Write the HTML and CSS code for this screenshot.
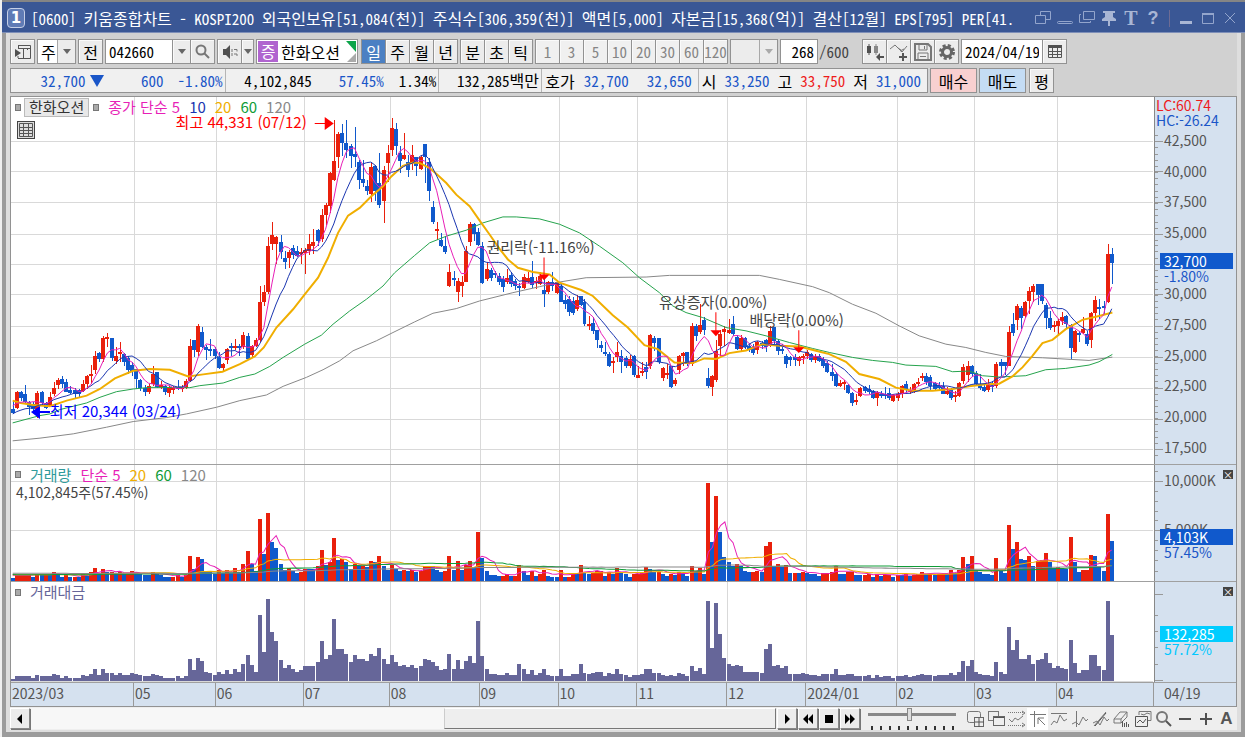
FILE: index.html
```html
<!DOCTYPE html>
<html lang="ko">
<head>
<meta charset="utf-8">
<title>[0600] 키움종합차트</title>
<link rel="stylesheet" href="styles.css">
</head>
<body>
<div class="window">
  <header class="titlebar">
    <span class="badge">1</span>
    <h1 class="title">[0600] <b>키움종합차트</b> - KOSPI200 <b>외국인보유</b>[51,084(<b>천</b>)] <b>주식수</b>[306,359(<b>천</b>)] <b>액면</b>[5,000] <b>자본금</b>[15,368(<b>억</b>)] <b>결산</b>[12<b>월</b>] EPS[795] PER[41.</h1>
    <div class="win-tools">
      <button aria-label="분리"><svg width="18" height="18" viewBox="0 0 18 18"><path d="M6.500 6.500V2.500h10v8h-5M1.500 6.500h10v8h-10z"/></svg></button>
      <button aria-label="접기"><svg width="18" height="18" viewBox="0 0 18 18"><rect x="1.500" y="12.500" width="15" height="2" rx="1"/></svg></button>
      <button aria-label="복제"><svg width="18" height="18" viewBox="0 0 18 18"><path d="M5.500 2.500h11v8h-11zM3 5.500H1.500v8h11V12"/></svg></button>
      <button aria-label="고정"><svg width="18" height="18" viewBox="0 0 18 18"><path class="solid" d="M3 2h12v2h-2v4l3 2v2h-6v5H8v-5H2v-2l3-2V4H3z"/></svg></button>
      <button class="serif" aria-label="글꼴">T</button>
      <button class="help" aria-label="도움말">?</button>
      <i class="sep"></i>
      <button aria-label="최소화"><svg width="18" height="18" viewBox="0 0 18 18"><path class="solid" d="M3 12h12v3H3z"/></svg></button>
      <button aria-label="최대화"><svg width="18" height="18" viewBox="0 0 18 18"><path d="M3.500 4.500h11v10h-11zM3 5.500h12M3 4.500h12"/></svg></button>
      <button aria-label="닫기"><svg width="18" height="18" viewBox="0 0 18 18"><path d="M4 4l10 10M14 4L4 14"/></svg></button>
    </div>
  </header>

  <main class="body">
    <section class="tools" aria-label="도구">
      <button class="btn" aria-label="패널"><svg width="20" height="18" viewBox="0 0 20 18"><path class="ln" d="M5 2.500h12.500v13H5M5.500 2v3M5 15v-2M5 5.500h12M10.500 5v10M14.500 5v2"/><path class="fl" d="M2 6l6 4-6 4z"/></svg></button>
      <div class="combo w-type"><select aria-label="종목구분"><option>주</option></select></div>
      <button class="btn ko">전</button>
      <div class="group">
        <input class="field code" aria-label="종목코드" value="042660">
        <button class="btn arrow" aria-label="목록"></button>
        <button class="btn" aria-label="검색"><svg width="18" height="18" viewBox="0 0 18 18"><circle class="ln2 gray" cx="7" cy="7" r="4.500"/><path class="ln2 gray" d="M10.500 10.500L15 15"/></svg></button>
      </div>
      <div class="group">
        <button class="btn" aria-label="소리"><svg width="18" height="18" viewBox="0 0 18 18"><path class="fl" d="M2 6h3l4-4v14l-4-4H2z"/><path class="ln gray" d="M11 6v3M11 10v3M13 6.500h3v2M13 11h3v2"/></svg></button>
        <button class="btn arrow slim" aria-label="소리 설정"></button>
      </div>
      <div class="stock"><b>증</b><span>한화오션</span><svg width="10" height="22" viewBox="0 0 10 22"><path fill="#0ca44a" d="M0 0h10v11z"/><path fill="#aaa" d="M10 12v9H1z"/></svg></div>
      <div class="group ko">
        <button class="btn on">일</button><button class="btn">주</button><button class="btn">월</button><button class="btn">년</button>
      </div>
      <div class="group ko"><button class="btn">분</button><button class="btn">초</button><button class="btn">틱</button></div>
      <div class="group off">
        <button class="btn">1</button><button class="btn">3</button><button class="btn">5</button><button class="btn">10</button><button class="btn">20</button><button class="btn">30</button><button class="btn">60</button><button class="btn">120</button>
      </div>
      <div class="combo w-min off"><select aria-label="분 단위" disabled><option></option></select></div>
      <label class="count"><input class="field" aria-label="봉 개수" value="268"><span>/600</span></label>
      <div class="group">
        <button class="btn" aria-label="차트 유형"><svg width="20" height="18" viewBox="0 0 20 18"><path class="fl" d="M2 3h4v7H2zM3.500 1h1v11h-1z"/><path class="fl gray" d="M9 3h4v7H9zM10.500 1h1v11h-1z"/><path class="fl" d="M11 14l4-4v3h4v2h-4v3z"/></svg></button>
        <button class="btn" aria-label="지표 추가"><svg width="20" height="18" viewBox="0 0 20 18"><path class="ln gray" d="M1 6l5-4 7 7 5-6M9 5l3 2M11 8l4-2"/><path class="ln2" d="M14 10v8M10 14h8"/></svg></button>
        <button class="btn" aria-label="저장"><svg width="20" height="18" viewBox="0 0 20 18"><path class="ln2 gray" d="M2 1h13l3 3v13H2z"/><path class="ln gray" d="M6 1v6h8V1M5 17v-7h10v7M7 13.500h6M11.500 3v3"/></svg></button>
        <button class="btn" aria-label="설정"><svg width="18" height="18" viewBox="0 0 18 18"><circle cx="9" cy="9" r="6.500" fill="none" stroke="#666" stroke-width="3" stroke-dasharray="3 2.100"/><circle cx="9" cy="9" r="4.500" fill="none" stroke="#666" stroke-width="3"/></svg></button>
      </div>
      <div class="group"><input class="field date" aria-label="기준일" value="2024/04/19"><button class="btn" aria-label="달력"><svg width="18" height="18" viewBox="0 0 18 18"><path class="fl" d="M2 2h14v3H2z"/><path class="ln" d="M2.500 3v11.500h13V3M2 8.500h13M2 11.500h13M6.500 5v9M11.500 5v9"/></svg></button></div>
    </section>

    <section class="quote" aria-label="시세">
      <div class="strip">
        <div class="cell c1"><span class="dn">32,700</span><i class="tri"></i><span class="dn w2">600</span><span class="dn">-1.80%</span></div>
        <div class="cell c2"><span>4,102,845</span><span class="dn">57.45%</span><span>1.34%</span></div>
        <div class="cell c3"><span>132,285<span class="ko">백만</span></span></div>
        <div class="cell c4"><span class="ko">호가</span><span class="dn">32,700</span><span class="dn wide">32,650</span></div>
        <div class="cell c5"><span class="ko">시</span><span class="dn">33,250</span><span class="ko">고</span><span class="up">33,750</span><span class="ko">저</span><span class="dn">31,000</span></div>
      </div>
      <button class="btn buy ko">매수</button>
      <button class="btn sell ko">매도</button>
      <button class="btn ko">평</button>
    </section>

    <section class="chart" aria-label="차트">
      <div class="pane price">
        <div class="plot">
          <svg id="price" viewBox="11 97 1144 368" preserveAspectRatio="none"></svg>
          <div class="legend"><i></i><button class="name">한화오션</button><i></i><span class="m5">종가 단순 5</span><span class="m10">10</span><span class="m20">20</span><span class="m60">60</span><span class="m120">120</span></div>
          <button class="gridbtn" aria-label="표"><svg width="16" height="16" viewBox="0 0 16 16"><path class="ln" d="M1.500 1.500h13v13h-13zM1 5.500h14M1 8.500h14M1 11.500h14M5.500 2v12M10.500 2v12"/></svg></button>
          <span class="note hi">최고 44,331 (07/12)</span>
          <span class="note lo">최저 20,344 (03/24)</span>
          <span class="note n1">권리락(-11.16%)</span>
          <span class="note n2">유상증자(0.00%)</span>
          <span class="note n3">배당락(0.00%)</span>
        </div>
        <div class="axis">
          <svg id="axis1" viewBox="1155 97 82 368" preserveAspectRatio="none"></svg>
          <div class="limits"><span class="up">LC:60.74</span><span class="dn">HC:-26.24</span></div>
          <ul class="scale"><li>42,500</li><li>40,000</li><li>37,500</li><li>35,000</li><li></li><li>30,000</li><li>27,500</li><li>25,000</li><li>22,500</li><li>20,000</li><li>17,500</li></ul>
          <div class="tag t1"><b>32,700</b><span>-1.80%</span></div>
        </div>
      </div>
      <div class="pane volume">
        <div class="plot">
          <svg id="volume" viewBox="11 466 1144 116" preserveAspectRatio="none"></svg>
          <div class="legend"><i></i><span class="vol">거래량</span><span class="m5">단순 5</span><span class="m20">20</span><span class="m60">60</span><span class="m120">120</span></div>
          <div class="sub">4,102,845주(57.45%)</div>
        </div>
        <div class="axis">
          <svg id="axis2" viewBox="1155 466 82 116" preserveAspectRatio="none"></svg>
          <ul class="scale"><li>10,000K</li><li>5,000K</li></ul>
          <div class="tag t2"><b>4,103K</b><span>57.45%</span></div>
          <button class="x" aria-label="거래량 닫기">×</button>
        </div>
      </div>
      <div class="pane value">
        <div class="plot">
          <svg id="value" viewBox="11 584 1144 100" preserveAspectRatio="none"></svg>
          <div class="legend"><i></i><span class="val">거래대금</span></div>
        </div>
        <div class="axis">
          <svg id="axis3" viewBox="1155 584 82 100" preserveAspectRatio="none"></svg>
          <div class="tag t3"><b>132,285</b><span>57.72%</span></div>
          <button class="x" aria-label="거래대금 닫기">×</button>
        </div>
      </div>
      <div class="dates"><div class="months"><span>2023/03</span><span>05</span><span>06</span><span>07</span><span>08</span><span>09</span><span>10</span><span>11</span><span>12</span><span>2024/01</span><span>02</span><span>03</span><span>04</span></div><div class="today">04/19</div></div>
    </section>

    <footer class="nav">
      <button class="sb" aria-label="이전"><svg width="12" height="12" viewBox="0 0 12 12"><path d="M8 1v10L3 6z"/></svg></button>
      <div class="track"><div class="thumb"></div></div>
      <button class="sb" aria-label="다음"><svg width="12" height="12" viewBox="0 0 12 12"><path d="M4 1v10l5-5z"/></svg></button>
      <button class="sb" aria-label="뒤로"><svg width="12" height="12" viewBox="0 0 12 12"><path d="M6 1v10L1 6zM11 1v10L6 6z"/></svg></button>
      <button class="sb" aria-label="정지"><svg width="12" height="12" viewBox="0 0 12 12"><path d="M2 2h8v8H2z"/></svg></button>
      <button class="sb" aria-label="앞으로"><svg width="12" height="12" viewBox="0 0 12 12"><path d="M1 1v10l5-5zM6 1v10l5-5z"/></svg></button>
      <div class="zoom"><input type="range" aria-label="확대" value="47"></div>
      <div class="icons">
        <button aria-label="창 추가"><svg width="18" height="18" viewBox="0 0 18 18"><rect class="ln gray" x="1.500" y="1.500" width="13" height="11" rx="2"/><rect x="8.500" y="7.500" width="9" height="9" fill="#eee" stroke="#666"/><path class="ln" d="M13 8v9M9 12h9"/></svg></button>
        <button aria-label="창 복사"><svg width="18" height="18" viewBox="0 0 18 18"><rect class="ln gray" x="1.500" y="1.500" width="10" height="9"/><rect x="6.500" y="6.500" width="11" height="9" fill="#eee" stroke="#666"/><path class="ln" d="M7 7.500h10"/></svg></button>
        <button aria-label="구간"><svg width="18" height="18" viewBox="0 0 18 18"><path class="ln gray" stroke-dasharray="1 1" d="M0 2.500h15M0 15.500h15"/><path class="ln gray" d="M1 9l3 3 3-4 3 2 5-4M14 1l3 2-3 2M14 13l3 2-3 2"/></svg></button>
        <button class="sel" aria-label="선택"><svg width="18" height="18" viewBox="0 0 18 18"><path class="ln gray" d="M1 4.500h16M5.500 1v16M9 8l7 7M9 14V8h6"/></svg></button>
        <button aria-label="수평선"><svg width="18" height="18" viewBox="0 0 18 18"><path class="ln gray" d="M1 3.500h16M1 15l3-4 3 2 3-8 4 6 3-2"/></svg></button>
        <button aria-label="수직선"><svg width="18" height="18" viewBox="0 0 18 18"><path class="ln gray" d="M5.500 1v16M1 14l4-2 3 3 4-8 3 4 2-2"/></svg></button>
        <button aria-label="추세선"><svg width="18" height="18" viewBox="0 0 18 18"><path class="ln gray" d="M2 16L14 2M1 13l4-2 3 4 4-8 3 4 2-2"/><path class="ln" d="M3 16L14 3"/></svg></button>
        <button aria-label="지우개"><svg width="18" height="18" viewBox="0 0 18 18"><path class="ln gray" d="M1 9l6-7h7l-6 7zM1 9v4h7V9M8 13l6-6V2"/><path class="ln" d="M9.500 17v-6M11.500 17v-4M13.500 17v-5M15.500 17v-3"/></svg></button>
        <button aria-label="차트 겹치기"><svg width="18" height="18" viewBox="0 0 18 18"><path class="ln gray" d="M5 5V1.500h12v9h-3M7 4l3 1 3-2 3 1"/><path class="ln" d="M1.500 6.500h12v10h-12zM3 13l3-3 3 3 3-4"/></svg></button>
        <button aria-label="돋보기"><svg width="18" height="18" viewBox="0 0 18 18"><circle class="ln2 gray" cx="7" cy="7" r="5"/><path class="ln2" d="M11 11l5 5"/></svg></button>
        <button aria-label="축소"><svg width="18" height="18" viewBox="0 0 18 18"><path class="fl" d="M3 8h12v2H3z"/></svg></button>
        <button aria-label="확대"><svg width="18" height="18" viewBox="0 0 18 18"><path class="fl" d="M3 8h12v2H3zM8 3h2v12H8z"/></svg></button>
        <button class="letter" aria-label="자동">A</button>
      </div>
    </footer>
  </main>
</div>
<script src="chart.js"></script>
</body>
</html>
```

FILE: styles.css
```css
* { box-sizing: border-box; }
body { margin: 0; background: #f0f0f0; color: #000; font: 15px/20px "Noto Sans Mono CJK KR", "Liberation Sans Narrow", "Noto Sans CJK KR", sans-serif; }
button, input, select { font: inherit; color: inherit; margin: 0; padding: 0; border: 0; border-radius: 0; background: none; }
ul { list-style: none; margin: 0; padding: 0; }
svg { display: block; }
.ko, .title b, .stock, .combo { font-size: 16px; font-weight: 400; }
.window { display: flex; flex-direction: column; min-height: 100vh; margin-left: 2px; background: #9c9c9c; }
.titlebar { display: flex; align-items: center; gap: 6px; height: 33px; padding: 2px 6px 0 5px; background: #3a5795; border-top: 2px solid #858585; border-bottom: 1px solid #7e8fb8; color: #fff; }
.badge { width: 18px; height: 20px; border: 1px solid #c5cfe6; border-radius: 4px; background: #5f7bb5; font: bold 15px/18px "DejaVu Sans", sans-serif; text-align: center; flex: none; }
.title { flex: 1; margin: 0; font-size: 15px; font-weight: 400; white-space: nowrap; overflow: hidden; min-width: 0; }
.win-tools { display: flex; align-items: center; gap: 4px; color: #a9b6d4; }
.win-tools button { width: 18px; height: 20px; }
.win-tools path, .win-tools rect { fill: none; stroke: #93a5cc; }
.win-tools .solid { fill: #a9b6d4; stroke: none; }
.win-tools .serif { font: bold 20px/20px "Liberation Serif", serif; }
.win-tools .help { font: bold 18px/20px "Liberation Sans", sans-serif; }
.sep { width: 1px; height: 17px; margin: 0 3px; background: #6e6c94; }

.body { flex: 1; display: flex; flex-direction: column; margin: 0 4px 5px; border: solid #dedede; border-width: 0 4px 2px; background: #d1d1d1; }
.tools, .quote { display: flex; align-items: center; gap: 2px; white-space: nowrap; }
.tools { padding-top: 6px; }
.quote { padding: 4px 0 3px; }
.group { display: flex; }
.group > * + * { margin-left: -1px; }
.btn { display: flex; align-items: center; justify-content: center; width: 25px; height: 25px; flex: none; border: 1px solid #929292; background: #ececec; box-shadow: inset 1px 1px #fafafa; overflow: hidden; }
.btn.on { background: #4b80c3; color: #fff; box-shadow: none; }
.off .btn { color: #858585; background: #f0f0f0; }
.field { height: 25px; border: 1px solid #929292; background: #fff; padding: 0 3px; }
.code { width: 68px; }
.date { width: 82px; }
.arrow { width: 19px; }
.arrow.slim { width: 13px; }
.arrow::after, .combo::after { content: ""; border: 4px solid transparent; border-top: 5px solid #666; border-bottom: 0; }
.combo { display: flex; align-items: center; position: relative; height: 25px; border: 1px solid #929292; background: linear-gradient(#ececec, #ececec) right / 17px 100% no-repeat #fff; }
.combo select { appearance: none; width: 100%; height: 23px; padding-left: 3px; }
.combo::after { position: absolute; right: 4px; }
.combo::before { content: ""; position: absolute; right: 17px; width: 1px; height: 23px; background: #a8a8a8; }
.w-type { width: 39px; }
.w-min { width: 48px; }
.combo.off { background-color: #ececec; }
.combo.off::after { border-top-color: #aaa; }
.stock { display: flex; align-items: center; gap: 3px; width: 102px; height: 25px; margin-right: 1px; padding: 1px; border: 1px solid #929292; background: #fff; }
.stock b { width: 20px; height: 21px; background: #b064cf; color: #fff; font-weight: 400; text-align: center; }
.stock span { flex: 1; }
.count { display: flex; align-items: center; gap: 1px; margin-right: 11px; }
.count .field { width: 38px; text-align: right; }
.count span { color: #444; }
.ln { fill: none; stroke: #555; }
.ln2 { fill: none; stroke: #555; stroke-width: 2; }
.fl { fill: #505050; }
.gray { stroke: #777; }
.fl.gray { fill: #888; stroke: none; }

.strip { display: flex; height: 25px; border: 1px solid #929292; background: #f0f0f0; width: 918px; }
.cell { display: flex; align-items: center; padding: 0 2px 0 3px; justify-content: flex-end; border-right: 1px solid #b5b5b5; }
.cell:last-child { border: 0; }
.c1 { width: 215px; }
.c2 { width: 214px; gap: 15px; }
.c2 .dn { margin-left: 12px; }
.c3 { width: 103px; }
.c4 { width: 157px; gap: 9px; padding-right: 6px; }
.c4 .wide { margin-left: 9px; }
.c5 { flex: 1; gap: 8px; padding-right: 6px; }
.tri { margin-left: 4px; border: 7px solid transparent; border-top: 12px solid #1a56c8; border-bottom: 0; }
.w2 { width: 60px; margin-right: 14px; text-align: right; }
.dn { color: #1a56c8; }
.up { color: #ee1c1c; }
.quote .buy, .quote .sell { width: 47px; background: #f8d0d0; box-shadow: none; }
.quote .sell { background: #c4dcf4; margin-right: 1px; }

.chart { flex: 1; display: grid; grid-template-rows: 369fr 118fr 101fr 23px; border: 1px solid #929292; background: #fff; font: 14px/16px "Noto Sans CJK KR", sans-serif; }
.pane, .dates { display: grid; grid-template-columns: 1fr 82px; min-height: 0; border-bottom: 1px solid #a0a0a0; }
.dates { border: 0; }
.plot, .axis { position: relative; min-width: 0; min-height: 0; }
.plot > svg:first-child, .axis > svg { position: absolute; inset: 0; width: 100%; height: 100%; }
.axis { border-left: 1px solid #888; background: #d5e1ef; color: #555; }
.legend { position: relative; display: flex; align-items: center; gap: 9px; height: 20px; padding-left: 4px; font-size: 15px; }
.legend i { width: 6px; height: 7px; border: 1px solid #777; background: #aaa; }
.legend .name { height: 19px; margin: 0 -5px 0 -6px; padding: 0 4px; border: 1px solid #bbb; background: #e8e8e8; color: #333; line-height: 16px; }
.m5 { color: #e71fb7; } .m10 { color: #1a35b0; } .m20 { color: #f0ae00; } .m60 { color: #109c38; } .m120 { color: #888; }
.vol { color: #2f9b9b; } .val { color: #666699; }
.sub { position: relative; padding-left: 5px; color: #444; line-height: 14px; }
.gridbtn { position: absolute; left: 6px; top: 24px; width: 18px; height: 18px; border: 1px solid #444; background: #ddd; }
.note { position: absolute; white-space: nowrap; color: #444; font-size: 15px; }
.hi { left: 14.4%; top: 4.6%; color: #f00; }
.lo { left: 3.4%; top: 83.500%; color: #00f; }
.n1 { left: 41.6%; top: 38.6%; }
.n2 { left: 56.7%; top: 53.6%; }
.n3 { left: 64.6%; top: 58.600%; }
.limits { position: absolute; top: 1px; left: 1px; display: grid; line-height: 15px; }
.scale { position: absolute; inset: 35px 0 9px 9px; display: flex; flex-direction: column; justify-content: space-between; }
.scale li { height: 16px; }
.volume .scale { inset: 7px 0 44px 9px; }
.tag { position: absolute; left: 5px; right: 3px; display: grid; color: #1a56c8; line-height: 15px; }
.tag b { height: 16px; padding-left: 4px; background: #1059cc; color: #fff; font-weight: 400; line-height: 16px; }
.tag span { padding-left: 4px; }
.t1 { top: 42.600%; }
.t2 { top: 55%; }
.t3 { top: 44%; color: #00c8ff; }
.t3 b { background: #00cdff; }
.x { position: absolute; right: 3px; top: 5px; width: 10px; height: 9px; background: #444; color: #fff; font-size: 10px; line-height: 9px; }
.months { display: grid; grid-template-columns: 123fr 82fr 88fr 86fr 90fr 79fr 79fr 90fr 79fr 91fr 78fr 82fr 97fr; }
.dates { background: #d5e1ef; color: #555; line-height: 20px; }
.months span { padding-left: 1px; border-right: 1px solid #999; }
.today { padding-left: 10px; }

.nav { display: flex; align-items: center; height: 23px; background: #eee; gap: 1px; }
.sb { display: flex; align-items: center; justify-content: center; width: 20px; height: 21px; flex: none; border: 1px solid; border-color: #fff #888 #888 #fff; background: #ececec; box-shadow: 1px 1px #777; }
.track { flex: 1; display: flex; justify-content: flex-end; height: 21px; background: #f7f7f7; }
.thumb { width: 44.500%; background: #eee; border: 1px solid; border-color: #fff #777 #777 #ccc; }
.zoom { width: 102px; height: 22px; padding: 0 7px; background: repeating-linear-gradient(90deg, #333 0 2px, transparent 2px 9px) 10px 18px / 84px 4px no-repeat; }
.zoom input { appearance: none; display: block; width: 100%; height: 14px; background: linear-gradient(#888, #888) center / 100% 3px no-repeat; }
.zoom input::-webkit-slider-thumb { appearance: none; width: 5px; height: 13px; background: #ddd; border: 1px solid #888; }
.icons { display: flex; }
.icons button { display: flex; align-items: center; justify-content: center; width: 21px; height: 22px; }
.icons .sel { background: #fff; }
.icons .letter { font: bold 17px/20px "Liberation Sans", sans-serif; color: #555; }
```

FILE: chart.js
```js
// Candles: colour, high, body top, body bottom, low (thirds of a pixel below y = 130)
const candles = `B815,840,852,855 R785,790,838,840 B785,788,808,815 B768,795,818,822 B815,820,835,858 B818,825,840,850 R785,792,840,868 B785,790,822,828 B820,822,836,840 R790,803,830,835
R758,776,796,800 R748,752,768,780 B742,750,766,778 B750,760,788,790 B770,782,792,796 B778,784,796,808 B780,784,794,808 R752,766,786,790 R738,742,766,780 R708,735,740,765
R665,680,724,735 B668,672,690,700 R622,628,690,700 R612,625,630,655 B627,628,688,695 R655,680,696,706 R640,668,674,700 B672,676,700,710 B680,688,724,735 B700,708,725,740
B720,720,750,780 B750,752,778,785 B768,776,788,802 R765,772,788,795 R710,735,764,770 B728,730,774,778 R755,768,774,780 B768,770,790,798 R770,776,792,805 R772,776,780,795
B752,774,780,784 R768,774,780,790 R750,755,778,780 R630,652,756,758 B632,634,662,684 R586,590,668,680 B594,608,655,658 B648,654,662,692 B630,660,664,680 B655,660,680,690
B670,684,718,720 R702,706,716,730 R658,660,692,705 B642,650,656,680 R630,652,656,664 B645,652,658,682 R610,618,654,660 B612,620,690,692 R648,650,678,688 R628,632,650,655
R472,518,632,638 R468,488,518,530 R320,350,490,495 R275,316,344,362 R318,320,344,405 B316,338,370,390 B366,386,398,420 R362,368,386,418 B348,358,378,390 B350,366,382,384
R358,370,376,405 R358,362,372,435 R312,346,366,378 R296,336,350,375 B298,300,332,350 R238,256,326,340 R220,225,256,285 R126,128,228,250 R-30,94,150,152 R5,12,80,115
B-18,10,40,78 B-30,38,60,85 B42,48,78,115 B-8,72,80,110 B90,95,150,178 B90,148,160,170 B150,168,184,194 R95,112,192,215 B105,108,184,212 B70,160,224,235
R108,120,212,280 R45,70,100,155 R-35,-5,60,78 B-22,-3,48,75 B48,68,92,130 R10,76,88,90 B75,95,120,142 R45,76,100,120 B80,80,108,138 R76,80,116,120
B42,42,80,158 B85,95,184,212 B212,232,275,282 R275,298,304,330 B308,330,352,355 B318,352,368,374 R405,428,470,475 B425,448,454,470 R448,455,490,518 R440,458,472,504
R350,366,458,460 R275,282,338,350 B278,282,312,332 B295,306,348,352 B338,352,462,465 R400,420,450,455 B418,424,446,455 B425,432,438,448 B432,440,458,468 B440,450,474,488
R420,446,460,465 B430,438,464,474 B450,456,472,482 B462,470,478,502 R436,444,476,480 R430,448,460,462 B395,444,468,478 R445,456,462,480 R430,440,465,468 B450,482,496,535
R456,460,488,494 B428,458,472,486 R452,458,492,496 B462,470,518,520 B498,514,526,540 B500,510,548,562 B505,515,552,558 R498,512,540,545 B500,502,528,530 B510,518,586,592
R560,584,588,604 B565,582,606,615 B602,604,634,658 B635,648,656,668 B640,668,674,682 B670,674,710,714 R684,696,700,732 R640,668,685,698 B662,682,698,732 B680,686,710,716
R678,690,710,718 B678,680,738,745 R712,738,746,748 R700,726,732,740 B700,714,728,750 R615,618,710,720 B622,628,642,665 B628,628,700,705 R715,718,748,755 R705,732,738,750
B710,712,774,778 R746,752,766,772 R678,680,724,735 R668,672,680,710 B668,670,706,710 R582,592,706,710 B585,590,622,635 R525,588,610,615 B565,572,602,618 B716,746,772,776
R738,742,774,802 R632,665,752,760 R602,614,652,680 R592,600,610,650 R570,604,612,615 B562,586,616,620 B618,624,660,664 R618,628,660,665 B624,626,654,660 B642,650,662,668
B645,655,672,678 R635,640,662,675 B635,642,652,660 B630,632,655,670 R592,605,650,655 B594,594,636,650 B630,635,665,678 B645,660,666,675 B676,680,706,718 B680,684,694,710
B675,684,694,710 R682,685,696,712 R676,680,686,705 R664,670,680,690 B672,676,692,698 R675,680,692,702 B676,682,696,700 B684,690,712,716 B695,702,730,732 B705,728,740,755
B730,735,770,775 R752,762,770,775 R752,758,766,782 B765,768,792,796 B788,792,822,832 R795,812,820,828 R775,778,802,805 B770,775,786,792 B768,780,790,795 B782,785,806,810
R785,788,806,832 B785,794,798,806 B775,794,798,810 B778,792,808,812 R795,798,816,820 R790,794,806,815 R768,772,796,806 B755,765,784,790 R775,782,790,795 R762,764,788,792
R748,758,764,772 R732,740,748,755 B732,742,758,768 B738,745,770,782 B758,762,780,785 B760,768,778,782 B758,770,794,796 R775,786,794,798 B778,782,806,812 R785,798,804,818
R758,762,800,805 R706,714,756,765 R695,710,738,758 B708,710,734,745 B725,732,766,772 B735,764,778,784 B762,775,786,788 R750,766,784,788 B755,765,774,788 R700,704,772,778
B690,698,710,740 B698,700,712,738 R592,608,710,712 B552,586,612,622 R526,530,574,604 B530,536,566,600 R515,518,562,568 R475,486,516,555 R466,470,488,520 B466,466,498,528
B466,466,516,525 B522,528,566,600 B545,566,598,602 R575,588,592,608 R570,575,590,620 R548,564,576,588 B558,560,585,600 B585,588,656,690 R602,606,670,672 B605,612,616,640
R565,600,612,615 B605,615,645,652 R548,552,634,656 R502,512,552,575 B510,534,538,570 B515,532,538,555 R346,376,520,522 B356,376,402,465`.split(/\s+/).map(s => ({
  c: s[0] === 'R' ? '#e9200c' : '#1059cc', v: s.slice(1).split(',').map(Number), up: s[0] === 'R'
}));

// Traded value per day, thirds of a pixel
const value = [7,14,14,14,14,10,18,14,14,14,22,18,10,14,10,10,10,18,14,22,36,18,36,25,25,18,25,18,18,25,22,18,14,14,22,18,14,10,10,10,14,10,14,67,33,70,60,28,25,18,28,22,32,22,36,26,50,78,48,28,198,86,247,146,120,62,40,48,36,28,32,44,44,44,56,120,66,78,187,96,96,82,56,78,66,66,60,82,74,100,66,52,78,56,44,48,42,48,
40,44,66,62,58,44,33,36,82,36,63,36,60,75,55,180,75,36,22,22,18,18,25,18,18,52,36,22,32,18,25,36,18,14,14,36,14,14,22,22,52,25,22,25,28,28,14,25,20,36,22,18,12,18,18,22,36,36,25,25,18,14,18,14,25,22,14,44,30,40,22,240,98,235,142,70,52,44,48,44,28,26,26,28,25,96,112,44,48,40,44,22,22,22,25,22,18,18,14,22,22,
22,36,18,18,22,22,14,14,14,18,10,18,12,14,14,10,14,14,18,12,14,18,22,18,18,14,18,18,18,25,18,28,60,44,62,28,22,18,18,14,58,26,20,163,92,122,66,66,78,50,62,66,84,54,38,44,40,36,122,54,25,32,32,78,78,44,32,240,138];

// Long moving averages, in tripled page coordinates
const ma20 = '38,815 62,822 100,828 150,832 200,815 260,800 300,780 345,748 400,725 450,720 510,722 565,742 610,736 668,728 720,705 765,682 792,655 830,595 880,540 915,495 955,445 985,385 1015,310 1045,258 1080,235 1115,200 1150,170 1175,140 1210,108 1240,98 1261,100 1290,115 1310,132 1340,160 1370,195 1410,230 1445,280 1470,315 1500,358 1525,390 1555,415 1600,428 1650,435 1680,460 1745,482 1780,500 1840,558 1885,595 1935,648 1975,660 2025,700 2080,702 2115,688 2150,690 2190,672 2240,664 2290,645 2340,650 2400,652 2450,665 2490,675 2540,698 2580,735 2640,750 2690,776 2740,785 2800,785 2860,780 2910,772 2960,766 3000,764 3040,742 3070,715 3100,680 3130,642 3160,632 3200,600 3250,572 3300,560 3340,550';
const ma60 = '38,882 120,860 150,855 180,842 260,822 300,805 350,788 400,780 450,775 570,776 600,770 670,762 720,745 765,735 810,712 850,685 915,645 965,618 1000,585 1050,545 1100,510 1150,470 1185,430 1245,378 1290,340 1340,320 1400,302 1450,280 1510,262 1550,262 1620,268 1680,284 1740,310 1800,350 1870,400 1920,445 1980,490 2020,530 2060,550 2110,565 2180,595 2240,605 2300,620 2370,640 2440,658 2490,670 2560,685 2620,694 2680,700 2720,708 2810,712 2860,728 2910,726 2950,740 3000,744 3080,740 3140,722 3200,718 3270,708 3300,698 3340,676';
const ma120 = '38,936 120,928 220,915 320,895 400,878 500,866 560,855 650,835 720,815 800,798 850,772 920,745 970,722 1020,695 1060,665 1130,635 1180,610 1245,578 1300,552 1370,538 1440,515 1540,490 1620,472 1680,458 1760,445 1940,443 2010,438 2280,438 2340,450 2440,472 2490,490 2560,525 2630,552 2700,590 2760,620 2840,645 2900,655 2960,670 3020,682 3130,686 3270,694 3340,684';

const barX = i => Math.round(12.7 + i * 4.12);
const rect = (x, y, w, h, c) => `<rect x="${x}" y="${y}" width="${w}" height="${h}" fill="${c}" shape-rendering="crispEdges"/>`;
const line = (pts, c, w) => `<polyline points="${pts}" fill="none" stroke="${c}" stroke-width="${w}"/>`;
const months = [134, 216, 304, 390, 480, 559, 638, 728, 807, 898, 975, 1058];
const columns = (y, h) => months.map(x => rect(x, y, 1, h, '#d9d9d9')).join('');
const scaled = s => s.split(' ').map(p => { const [x, y] = p.split(','); return `${x / 3},${130 + y / 3}`; }).join(' ');
const average = (list, n, start) => list.map((_, i) => {
  let sum = 0;
  for (let k = 0; k < n; k++) sum += i - k < 0 ? start : list[i - k];
  return sum / n;
});
const path = (list, fn) => list.map((v, i) => `${12.7 + i * 4.12},${fn(v).toFixed(1)}`).join(' ');

const rows = [141, 171, 202, 234, 265, 295, 327, 358, 389, 420, 450];
let out = columns(97, 368) + rows.map(y => rect(11, y, 1143, 1, '#d9d9d9')).join('');
candles.forEach((k, i) => {
  const [h, t, b, l] = k.v.map(n => Math.round(130 + n / 3));
  out += rect(barX(i), h, 1, Math.max(1, l - h), k.c) + rect(barX(i) - 2, t, 4, Math.max(2, b - t), k.c);
});
const close = candles.map(k => k.up ? k.v[1] : k.v[2]);
out += line(scaled(ma120), '#888', 1) + line(scaled(ma60), '#25a34c', 1) + line(scaled(ma20), '#f0ae00', 2);
out += line(path(average(close, 10, 855), v => 130 + v / 3), '#1a35b0', 1);
out += line(path(average(close, 5, 825), v => 130 + v / 3), '#e71fb7', 1);
out += '<path d="M315 123h10v-6l9 6.500-9 6.500v-6h-10z" fill="red"/><path d="M31 413l9-6v5h10v2H40v6z" fill="#00f"/>';
[[544, 258, 275], [716, 313, 331], [799, 331, 348]].forEach(([x, a, b]) => {
  out += `<path d="M${x} ${a}h1v${b - a}h5l-5.500 6-5.500-6h5z" fill="red"/>`;
});
document.getElementById('price').innerHTML = out;

const volume = value.map((v, i) => v * 27.5 / (25 + (686 - close[i]) / 37.2));
out = columns(466, 116) + [482, 531].map(y => rect(11, y, 1143, 1, '#d9d9d9')).join('') + rect(11, 581, 1143, 1, '#d9d9d9');
volume.forEach((v, i) => {
  const h = Math.round(v / 3);
  out += rect(barX(i) - 2, 581 - h, 4, h, i && v >= volume[i - 1] ? '#e9200c' : '#1059cc');
});
[[5, '#e71fb7'], [20, '#f0ae00'], [60, '#109c38'], [120, '#888']].forEach(([n, c]) => {
  out += line(path(average(volume, n, n > 60 ? 22 : 18), v => 581 - v / 3), c, 1);
});
document.getElementById('volume').innerHTML = out;

out = columns(584, 100) + rect(11, 683, 1143, 1, '#d9d9d9');
value.forEach((v, i) => { const h = Math.round(v / 3); out += rect(barX(i) - 2, 683 - h, 4, h, '#666699'); });
document.getElementById('value').innerHTML = out;

const ticks = (id, major, minor) => {
  document.getElementById(id).innerHTML =
    minor.map(y => rect(1155, y, 3, 1, '#999')).join('') + major.map(y => rect(1155, y, 8, 1, '#999')).join('');
};
const steps = (a, b, s) => { const r = []; for (let y = a; y < b; y += s) r.push(Math.round(y)); return r; };
ticks('axis1', rows, steps(135, 462, 6.18));
ticks('axis2', [482, 531, 581], steps(472, 580, 9.9));
ticks('axis3', [596, 682], [617, 633, 649, 666]);
```
